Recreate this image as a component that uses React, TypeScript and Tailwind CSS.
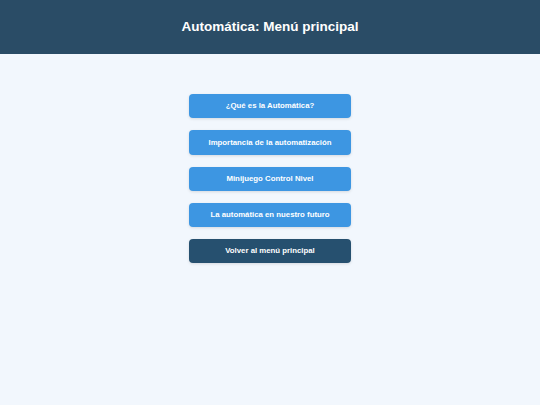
const items = [
  "¿Qué es la Automática?",
  "Importancia de la automatización",
  "Minijuego Control Nivel",
  "La automática en nuestro futuro",
];

export default function App() {
  return (
    <div className="min-h-[405px] bg-[#f2f7fd] font-['Liberation_Sans',Arial,sans-serif]">
      <header className="h-[54px] bg-[#2a4c66] flex items-center justify-center">
        <h1 className="text-[13.5px] font-bold text-white">Automática: Menú principal</h1>
      </header>
      <main className="flex flex-col items-center pt-10 gap-3">
        {items.map((label) => (
          <button
            key={label}
            className="w-[162px] h-[24.25px] rounded-[4px] bg-[#3d96e2] text-white text-[7.8px] font-bold shadow-[0_1px_3px_rgba(0,0,0,0.12)]"
          >
            {label}
          </button>
        ))}
        <button className="w-[162px] h-[24.25px] rounded-[4px] bg-[#26506f] text-white text-[7.8px] font-bold shadow-[0_1px_3px_rgba(0,0,0,0.12)]">
          Volver al menú principal
        </button>
      </main>
    </div>
  );
}
